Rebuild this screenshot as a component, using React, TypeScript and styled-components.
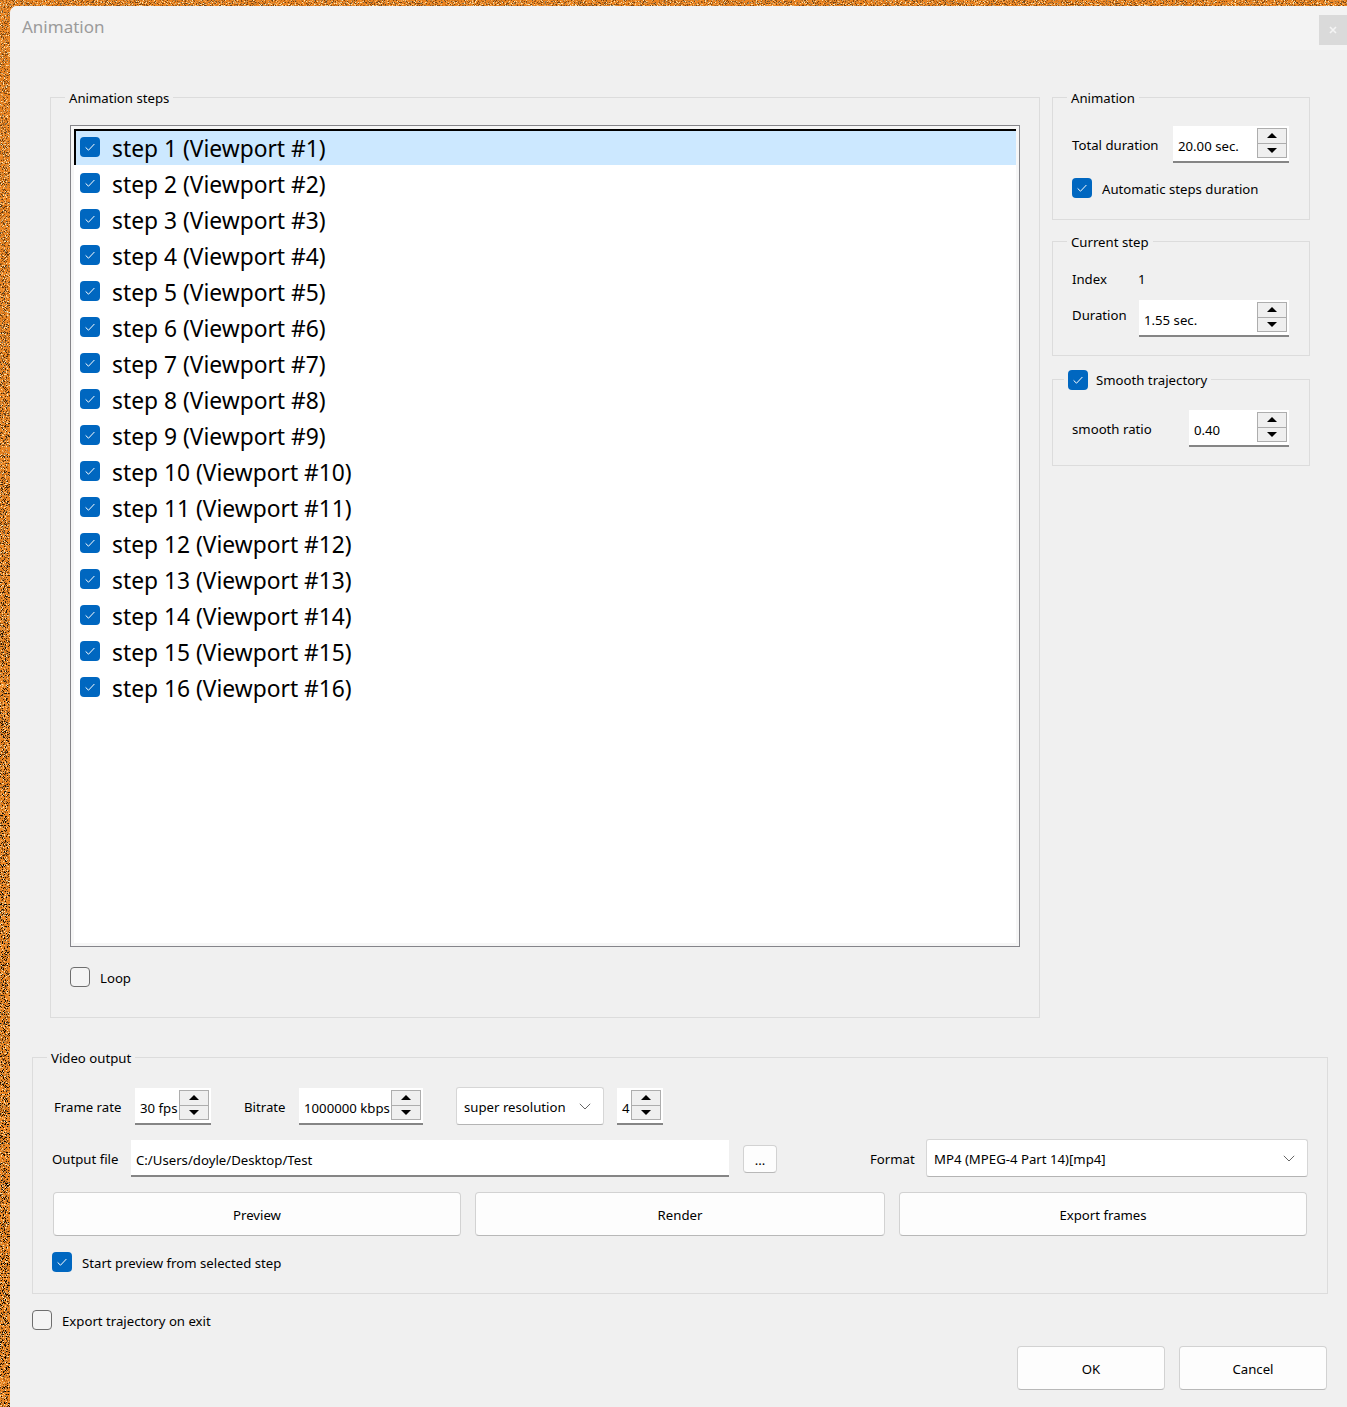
import React from 'react';
import styled, { createGlobalStyle } from 'styled-components';

const Global = createGlobalStyle`
  html, body { margin: 0; padding: 0; background: #ec8420; }
  body { font-family: "Noto Sans", "Open Sans", sans-serif; font-size: 13.2px; color: #000; }
  * { box-sizing: border-box; }
`;

const Desktop = styled.div`
  position: relative;
  width: 1347px;
  height: 1407px;
  padding: 6px 0 0 10px;
  overflow: hidden;
  background: #ec8420;
`;
const Noise = styled.svg`
  position: absolute;
  inset: 0;
  width: 1347px;
  height: 1407px;
`;
const Window = styled.div`
  position: relative;
  width: 1337px;
  height: 1401px;
  background: #f0f0f0;
  border-top-left-radius: 7px;
  overflow: hidden;
  display: flex;
  flex-direction: column;
`;
const TitleBar = styled.div`
  height: 44px;
  flex: none;
  background: #f3f3f3;
  padding: 0 0 0 12px;
  display: flex;
  align-items: flex-start;
  justify-content: space-between;
`;
const Title = styled.div`
  font-size: 17px;
  line-height: 41px;
  color: #9b9b9b;
`;
const Close = styled.div`
  width: 28px;
  height: 30px;
  margin-top: 9px;
  background: #dadada;
  display: flex;
  align-items: center;
  justify-content: center;
`;
const Content = styled.div`
  flex: 1;
  padding: 47px 19px 0 22px;
  display: flex;
  flex-direction: column;
`;
const TopRow = styled.div`
  display: flex;
  height: 921px;
  padding: 0 18px;
  gap: 12px;
`;
const Group = styled.div<{ $h: number; $w?: number; $mt?: number }>`
  position: relative;
  flex: none;
  height: ${p => p.$h}px;
  width: ${p => (p.$w ? `${p.$w}px` : 'auto')};
  margin-top: ${p => p.$mt ?? 0}px;
  border: 1px solid #dcdcdc;
  padding: 28px 19px 0;
`;
const Legend = styled.div<{ $left?: number }>`
  position: absolute;
  top: -10px;
  left: ${p => p.$left ?? 14}px;
  height: 20px;
  padding: 0 4px;
  background: #f0f0f0;
  line-height: 20px;
  white-space: nowrap;
  display: flex;
  align-items: center;
`;
const StepsGroup = styled(Group)`
  width: 990px;
  padding-top: 27px;
`;
const SideColumn = styled.div`
  width: 258px;
  display: flex;
  flex-direction: column;
`;
const List = styled.div`
  height: 822px;
  border: 1px solid #85858a;
  padding: 3px;
  background: #fff;
  box-shadow: inset 0 0 0 3px #f6f6f6;
`;
const StepRow = styled.div<{ $sel?: boolean }>`
  height: 36px;
  display: flex;
  align-items: center;
  padding-left: ${p => (p.$sel ? 4 : 6)}px;
  background: ${p => (p.$sel ? 'linear-gradient(#000 0 2px, #cce8ff 2px)' : 'transparent')};
  border-left: ${p => (p.$sel ? '2px solid #000' : '0')};
  font-size: 22.8px;
  white-space: nowrap;
  gap: 12px;
`;
const StepText = styled.span`
  margin-top: 2px;
`;
const Box = styled.span<{ $on: boolean }>`
  flex: none;
  width: 20px;
  height: 20px;
  border-radius: 4px;
  display: inline-flex;
  align-items: center;
  justify-content: center;
  background: ${p => (p.$on ? '#0067c0' : '#f4f4f4')};
  border: ${p => (p.$on ? '0' : '1px solid #6e6e6e')};
`;
const CheckRow = styled.div<{ $mt?: number; $gap?: number; $ml?: number }>`
  display: flex;
  align-items: center;
  height: 20px;
  gap: ${p => p.$gap ?? 10}px;
  margin-top: ${p => p.$mt ?? 0}px;
  margin-left: ${p => p.$ml ?? 0}px;
  white-space: nowrap;
`;
const CheckText = styled.span`
  margin-top: 2px;
`;
const Row = styled.div<{ $mt?: number; $ml?: number; $h?: number }>`
  display: flex;
  align-items: center;
  height: ${p => p.$h ?? 38}px;
  margin-top: ${p => p.$mt ?? 0}px;
  margin-left: ${p => p.$ml ?? 0}px;
  white-space: nowrap;
`;
const Label = styled.span<{ $w?: number; $ml?: number; $up?: number }>`
  display: inline-block;
  flex: none;
  width: ${p => (p.$w ? `${p.$w}px` : 'auto')};
  margin-left: ${p => p.$ml ?? 0}px;
  margin-bottom: ${p => p.$up ?? 0}px;
`;
const Spin = styled.div<{ $w: number; $ml?: number }>`
  flex: none;
  align-self: flex-start;
  width: ${p => p.$w}px;
  height: 37px;
  margin-left: ${p => p.$ml ?? 0}px;
  background: #fff;
  border-bottom: 2px solid #858585;
  display: flex;
  align-items: flex-start;
  justify-content: space-between;
  padding: 2px 2px 0 5px;
`;
const SpinValue = styled.span`
  line-height: 36px;
  white-space: nowrap;
`;
const SpinButtons = styled.div`
  flex: none;
  width: 30px;
  height: 30px;
  border: 1px solid #adadad;
  background: #efefef;
  display: flex;
  flex-direction: column;
`;
const SpinCell = styled.div<{ $down?: boolean }>`
  flex: 1;
  display: flex;
  align-items: center;
  justify-content: center;
  border-top: ${p => (p.$down ? '1px solid #adadad' : '0')};
`;
const Arrow = styled.span<{ $down?: boolean }>`
  width: 0;
  height: 0;
  border-left: 5px solid transparent;
  border-right: 5px solid transparent;
  border-bottom: ${p => (p.$down ? '0' : '5px solid #000')};
  border-top: ${p => (p.$down ? '5px solid #000' : '0')};
`;
const Combo = styled.div<{ $w: number; $ml?: number }>`
  flex: none;
  width: ${p => p.$w}px;
  height: 38px;
  margin-left: ${p => p.$ml ?? 0}px;
  margin-bottom: 2px;
  background: #fff;
  border: 1px solid #d6d6d6;
  border-bottom-color: #b4b4b4;
  border-radius: 3px;
  padding: 1px 12px 0 7px;
  display: flex;
  align-items: center;
  justify-content: space-between;
`;
const Input = styled.div<{ $w: number; $ml?: number }>`
  flex: none;
  align-self: flex-start;
  width: ${p => p.$w}px;
  height: 37px;
  margin-left: ${p => p.$ml ?? 0}px;
  background: #fff;
  border-bottom: 2px solid #858585;
  padding: 2px 5px 0;
  line-height: 36px;
`;
const Button = styled.div<{ $w: number; $h?: number; $ml?: number }>`
  flex: none;
  width: ${p => p.$w}px;
  height: ${p => p.$h ?? 44}px;
  margin-left: ${p => p.$ml ?? 0}px;
  padding-top: 1px;
  background: #fdfdfd;
  border: 1px solid #d2d2d2;
  border-bottom-color: #b8b8b8;
  border-radius: 4px;
  display: flex;
  align-items: center;
  justify-content: center;
`;
const DialogButtons = styled.div`
  display: flex;
  justify-content: flex-end;
  gap: 14px;
  margin-top: 16px;
  padding-right: 1px;
`;

const Tick = () => (
  <svg width="12" height="12" viewBox="0 0 12 12" fill="none">
    <path d="M1.6 6.4 L4.5 9.2 L10.4 3" stroke="#fff" strokeWidth="1" />
  </svg>
);
const Check = ({ on }: { on: boolean }) => <Box $on={on}>{on && <Tick />}</Box>;
const Chevron = () => (
  <svg width="12" height="7" viewBox="0 0 12 7" fill="none">
    <path d="M0.8 0.8 L6 6 L11.2 0.8" stroke="#666" strokeWidth="1" />
  </svg>
);
const SpinBox = ({ w, ml, value }: { w: number; ml?: number; value: string }) => (
  <Spin $w={w} $ml={ml}>
    <SpinValue>{value}</SpinValue>
    <SpinButtons>
      <SpinCell><Arrow /></SpinCell>
      <SpinCell $down><Arrow $down /></SpinCell>
    </SpinButtons>
  </Spin>
);

const steps = Array.from({ length: 16 }, (_, i) => i + 1);

export default function App() {
  return (
    <Desktop>
      <Global />
      <Noise aria-hidden="true">
        <defs>
          <filter id="speck" x="0" y="0" width="100%" height="100%">
            <feTurbulence type="fractalNoise" baseFrequency="1.1" numOctaves="2" seed="7" />
            <feColorMatrix type="matrix" values="0 0 0 0 0  0 0 0 0 0  0 0 0 0 0  7 0 0 0 -3.7" />
          </filter>
          <filter id="glint" x="0" y="0" width="100%" height="100%">
            <feTurbulence type="fractalNoise" baseFrequency="0.9" numOctaves="2" seed="21" />
            <feColorMatrix type="matrix" values="0 0 0 0 1  0 0 0 0 0.78  0 0 0 0 0.42  0 7 0 0 -3.9" />
          </filter>
          <linearGradient id="fade" x1="0" y1="0" x2="0" y2="1">
            <stop offset="0" stopColor="#fff" stopOpacity="0.5" />
            <stop offset="0.5" stopColor="#fff" stopOpacity="0.9" />
            <stop offset="1" stopColor="#fff" stopOpacity="1" />
          </linearGradient>
          <mask id="fadeMask">
            <rect width="1347" height="1407" fill="url(#fade)" />
          </mask>
        </defs>
        <rect width="1347" height="1407" filter="url(#glint)" />
        <g mask="url(#fadeMask)">
          <rect width="1347" height="1407" filter="url(#speck)" />
        </g>
      </Noise>
      <Window>
        <TitleBar>
          <Title>Animation</Title>
          <Close>
            <svg width="8" height="8" viewBox="0 0 8 8" fill="none">
              <path d="M1 1 L7 7 M7 1 L1 7" stroke="#f4f4f4" strokeWidth="1.6" />
            </svg>
          </Close>
        </TitleBar>
        <Content>
          <TopRow>
            <StepsGroup $h={921}>
              <Legend>Animation steps</Legend>
              <List>
                {steps.map(n => (
                  <StepRow key={n} $sel={n === 1}>
                    <Check on />
                    <StepText>{`step ${n} (Viewport #${n})`}</StepText>
                  </StepRow>
                ))}
              </List>
              <CheckRow $mt={20}>
                <Check on={false} />
                <CheckText>Loop</CheckText>
              </CheckRow>
            </StepsGroup>
            <SideColumn>
              <Group $h={123}>
                <Legend>Animation</Legend>
                <Row>
                  <Label $w={101}>Total duration</Label>
                  <SpinBox w={116} value="20.00 sec." />
                </Row>
                <CheckRow $mt={14}>
                  <Check on />
                  <CheckText>Automatic steps duration</CheckText>
                </CheckRow>
              </Group>
              <Group $h={115} $mt={21}>
                <Legend>Current step</Legend>
                <Row $h={18}>
                  <Label $w={66}>Index</Label>
                  <span>1</span>
                </Row>
                <Row $mt={12}>
                  <Label $w={67} $up={8}>Duration</Label>
                  <SpinBox w={150} value="1.55 sec." />
                </Row>
              </Group>
              <Group $h={87} $mt={23}>
                <Legend $left={11}>
                  <Check on />
                  <Label $ml={8}>Smooth trajectory</Label>
                </Legend>
                <Row $mt={2}>
                  <Label $w={117}>smooth ratio</Label>
                  <SpinBox w={100} value="0.40" />
                </Row>
              </Group>
            </SideColumn>
          </TopRow>
          <Group $h={237} $mt={39}>
            <Legend>Video output</Legend>
            <Row $mt={2} $ml={2}>
              <Label $w={81}>Frame rate</Label>
              <SpinBox w={76} value="30 fps" />
              <Label $ml={33} $w={55}>Bitrate</Label>
              <SpinBox w={124} value="1000000 kbps" />
              <Combo $w={148} $ml={33}>
                <span>super resolution</span>
                <Chevron />
              </Combo>
              <SpinBox w={46} ml={13} value="4" />
            </Row>
            <Row $mt={14}>
              <Label $w={79}>Output file</Label>
              <Input $w={598}>C:/Users/doyle/Desktop/Test</Input>
              <Button $w={34} $h={28} $ml={14}>...</Button>
              <Label $ml={93} $w={56}>Format</Label>
              <Combo $w={382}>
                <span>MP4 (MPEG-4 Part 14)[mp4]</span>
                <Chevron />
              </Combo>
            </Row>
            <Row $mt={14} $ml={1} $h={44}>
              <Button $w={408}>Preview</Button>
              <Button $w={410} $ml={14}>Render</Button>
              <Button $w={408} $ml={14}>Export frames</Button>
            </Row>
            <CheckRow $mt={16}>
              <Check on />
              <CheckText>Start preview from selected step</CheckText>
            </CheckRow>
          </Group>
          <CheckRow $mt={16}>
            <Check on={false} />
            <CheckText>Export trajectory on exit</CheckText>
          </CheckRow>
          <DialogButtons>
            <Button $w={148}>OK</Button>
            <Button $w={148}>Cancel</Button>
          </DialogButtons>
        </Content>
      </Window>
    </Desktop>
  );
}
